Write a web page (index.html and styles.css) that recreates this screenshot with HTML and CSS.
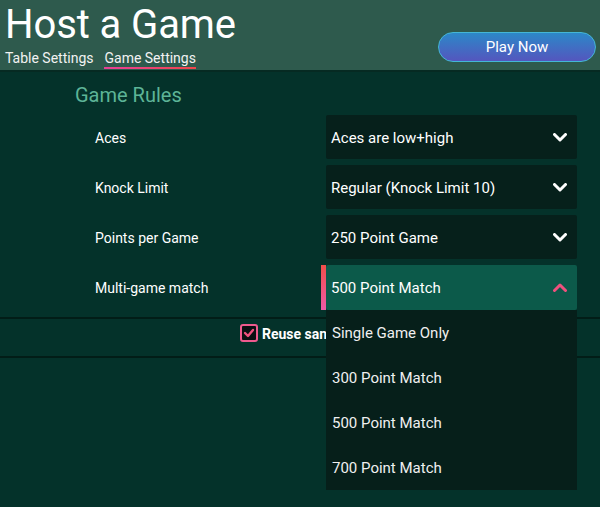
FILE: index.html
```html
<!DOCTYPE html>
<html>
<head>
<meta charset="utf-8">
<link rel="stylesheet" href="styles.css">
</head>
<body>
<header class="top">
  <div class="top-left">
    <h1 class="title">Host a Game</h1>
    <nav class="tabs">
      <span class="tab">Table Settings</span>
      <span class="tab active">Game Settings</span>
    </nav>
  </div>
  <button class="play">Play Now</button>
</header>
<main class="content">
  <h2 class="section-title">Game Rules</h2>
  <div class="rows">
    <div class="row">
      <span class="label">Aces</span>
      <div class="select"><span class="value">Aces are low+high</span>
        <svg class="chev" width="14" height="9" viewBox="0 0 14 9"><polyline points="1.5,1.5 7,7 12.5,1.5" fill="none" stroke="#fff" stroke-width="3" stroke-linecap="round" stroke-linejoin="round"/></svg>
      </div>
    </div>
    <div class="row">
      <span class="label">Knock Limit</span>
      <div class="select"><span class="value">Regular (Knock Limit 10)</span>
        <svg class="chev" width="14" height="9" viewBox="0 0 14 9"><polyline points="1.5,1.5 7,7 12.5,1.5" fill="none" stroke="#fff" stroke-width="3" stroke-linecap="round" stroke-linejoin="round"/></svg>
      </div>
    </div>
    <div class="row">
      <span class="label">Points per Game</span>
      <div class="select"><span class="value">250 Point Game</span>
        <svg class="chev" width="14" height="9" viewBox="0 0 14 9"><polyline points="1.5,1.5 7,7 12.5,1.5" fill="none" stroke="#fff" stroke-width="3" stroke-linecap="round" stroke-linejoin="round"/></svg>
      </div>
    </div>
    <div class="row">
      <span class="label">Multi-game match</span>
      <div class="select open"><span class="value">500 Point Match</span>
        <svg class="chev" width="14" height="9" viewBox="0 0 14 9"><polyline points="1.5,7.5 7,2 12.5,7.5" fill="none" stroke="#f0507e" stroke-width="3" stroke-linecap="round" stroke-linejoin="round"/></svg>
        <ul class="menu">
          <li>Single Game Only</li>
          <li>300 Point Match</li>
          <li>500 Point Match</li>
          <li>700 Point Match</li>
        </ul>
      </div>
    </div>
  </div>
  <div class="option-bar">
    <label class="check">
      <span class="box"><svg width="12" height="10" viewBox="0 0 12 10"><polyline points="2,5 5,8 10,2" fill="none" stroke="#f0507e" stroke-width="2.4" stroke-linecap="round" stroke-linejoin="round"/></svg></span>
      <span class="check-text">Reuse same settings</span>
    </label>
  </div>
</main>
</body>
</html>
```
FILE: styles.css
```css
* { box-sizing: border-box; }
html, body { margin: 0; padding: 0; }
body {
  width: 600px;
  height: 507px;
  overflow: hidden;
  background: #04322a;
  font-family: Roboto, "Noto Sans", sans-serif;
  color: #fff;
}
.top {
  height: 72px;
  background: #2e5a4d;
  border-bottom: 2px solid #062a22;
  display: flex;
  justify-content: space-between;
  align-items: flex-end;
  padding: 0 4px 0 5px;
}
.top-left { display: flex; flex-direction: column; }
.title {
  margin: 0;
  font-size: 40px;
  font-weight: 400;
  line-height: 40px;
  margin-top: 7px;
  letter-spacing: -0.1px;
}
.tabs {
  display: flex;
  gap: 11px;
  margin-top: 4px;
  height: 21px;
}
.tab {
  font-size: 14px;
  line-height: 18px;
  color: #f2f2f2;
  height: 20px;
}
.tab.active {
  border-bottom: 2px solid transparent;
  border-image: linear-gradient(90deg, #e8409a, #f0474a) 1;
}
.play {
  width: 158px;
  height: 30px;
  margin-bottom: 8px;
  border-radius: 15px;
  border: 1.5px solid #44b6d6;
  background: linear-gradient(180deg, #2c88c8, #5456be);
  color: #fff;
  font-family: Roboto, sans-serif;
  font-size: 15px;
}
.content { position: relative; }
.section-title {
  margin: 10px 0 0 75px;
  font-size: 20px;
  font-weight: 400;
  line-height: 26px;
  color: #5db497;
  height: 26px;
}
.rows {
  margin-top: 7px;
  display: flex;
  flex-direction: column;
  gap: 6px;
}
.row {
  display: flex;
  align-items: center;
  height: 44px;
}
.label {
  width: 326px;
  padding-left: 95px;
  padding-top: 2px;
  font-size: 14px;
}
.select {
  position: relative;
  width: 251px;
  height: 44px;
  background: #06201b;
  border-radius: 2px;
  display: flex;
  align-items: center;
  justify-content: space-between;
  padding: 0 10px 0 5px;
  font-size: 15px;
}
.value { padding-top: 2px; }
.select.open {
  height: 45px;
  background: #0c5a4a;
}
.select.open::before {
  content: "";
  position: absolute;
  left: -5px;
  top: 0;
  width: 5px;
  height: 45px;
  background: linear-gradient(180deg, #f04f4a, #ef5aa8);
}
.menu {
  position: absolute;
  left: 0;
  top: 45px;
  width: 251px;
  margin: 0;
  padding: 0;
  list-style: none;
  background: #061f1a;
  z-index: 5;
}
.menu li {
  height: 45px;
  line-height: 47px;
  padding-left: 6px;
  font-size: 15px;
  color: #f0f0f0;
}
.option-bar {
  margin-top: 8px;
  height: 41px;
  border-top: 2px solid #021d17;
  border-bottom: 2px solid #021d17;
  display: flex;
  align-items: flex-start;
  padding: 5px 0 0 240px;
}
.check {
  display: flex;
  align-items: center;
  gap: 4px;
}
.box {
  width: 18px;
  height: 18px;
  border: 2px solid #ef5a8e;
  border-radius: 3px;
  background: #0b0f12;
  display: flex;
  align-items: center;
  justify-content: center;
}
.check-text {
  font-size: 14px;
  font-weight: 700;
  white-space: nowrap;
  overflow: hidden;
  width: 64px;
  padding-top: 1px;
}
```
